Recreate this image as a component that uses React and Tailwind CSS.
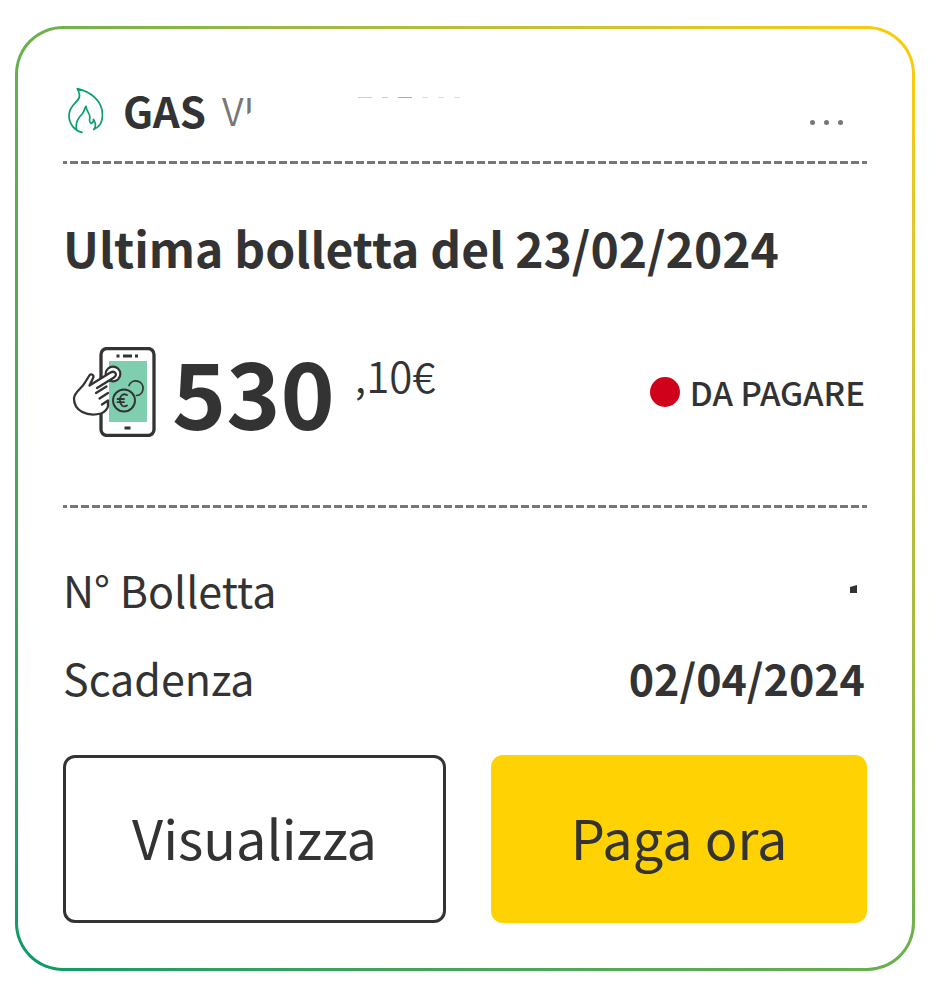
function FlameIcon() {
  return (
    <svg className="h-12 w-10 shrink-0" viewBox="0 0 40 48" fill="none" stroke="#0a9f6b" strokeWidth="1.7" strokeLinecap="round" strokeLinejoin="round" aria-hidden="true">
      <path d="M19 46.3C12 45 6 38 6 29.500C6 17 18.500 16 16.300 8C16 6 15.300 4.500 14.300 2.700C27 5.500 39.500 14.500 39.500 29C39.500 36 36.500 41 30.700 43.500C32.500 41.500 33 39.500 32 36.500L30.500 33.300C30.500 35.500 29.500 37.300 27.800 37.300C25 35 28 32 26.300 28.500C25.300 26 23.200 24 23 20.300C21.500 22 21.500 25 19.500 27.500C16.500 31 12 35 13.500 43.500" />
    </svg>
  );
}

function PhonePayIcon() {
  return (
    <svg className="h-[90px] w-[84px] shrink-0" viewBox="0 0 84 90" fill="none" stroke="#333" strokeLinecap="round" strokeLinejoin="round" aria-hidden="true">
      <rect x="29" y="1.500" width="53" height="87" rx="6" fill="#fff" strokeWidth="3.300" />
      <path d="M37 14H75V75H37Z" fill="#7fceb0" stroke="none" />
      <path d="M44.500 9H47.500M51 9H60M63 9H66M52.500 81H58.500" strokeWidth="3" strokeLinecap="butt" />
      <path d="M57 38.500A7.300 7.300 0 1 1 64.500 48.500" strokeWidth="1.700" />
      <circle cx="52" cy="53.500" r="11" strokeWidth="1.900" />
      <path d="M55 48C50 45.500 47.500 50 48 53.500C48.300 58 51 61 55 58.500M45.500 52H52M45.500 55.200H52" strokeWidth="1.800" />
      <circle cx="41" cy="27" r="7.300" fill="#fff" strokeWidth="2.200" />
      <path d="M29 66.500C15 70 2 64 2 51.500C2.500 44.500 9.500 42 13 35.500L17 29C18.500 26 22 27.500 21.300 30.500L17.500 38.500L38.500 25.500C43 23 46 28 42 30.500L36 34.500V59C36 61 33 65 29 66.500Z" fill="#fff" stroke="none" />
      <path d="M29 66.500C15 70 2 64 2 51.500C2.500 44.500 9.500 42 13 35.500L17 29C18.500 26 22 27.500 21.300 30.500L17.500 38.500L38.500 25.500C43 23 46 28 42 30.500L25 41M24 46L34.500 39.500M27.500 51.500L36 46M30 57.500L36 53.500V59C36 61 33 65 29 66.500" strokeWidth="2.300" />
    </svg>
  );
}

function DashedRule() {
  return <hr className="h-[3px] border-0 bg-[repeating-linear-gradient(90deg,#777_0,#777_4px,transparent_4px,transparent_7px,#777_7px,#777_11px)]" />;
}

function MaskedName() {
  return (
    <span className="flex h-12 flex-1 items-center text-[38px] font-[350] leading-[44px] text-[#777]">
      <span>V</span>
      <span className="[clip-path:polygon(0_0,100%_0,100%_50%,0_66%)]">I</span>
      <span className="ml-26 flex gap-[10px] self-start pt-[11px]" aria-hidden="true">
        <i className="h-px w-[14px] bg-[#ccc]" />
        <i className="h-px w-[6px] bg-[#ccc]" />
        <i className="h-px w-[14px] bg-[#aaa]" />
        <i className="h-px w-[6px] bg-[#ddd]" />
        <i className="h-px w-[6px] bg-[#ddd]" />
        <i className="h-px w-[6px] bg-[#ddd]" />
      </span>
    </span>
  );
}

export default function App() {
  return (
    <main className="bg-white pt-[26px] pr-[33px] pb-[19px] pl-[15px] font-['Noto_Sans_CJK_SC','Noto_Sans',sans-serif] text-[#333]">
      <article className="rounded-[48px] bg-linear-to-tr from-[#009b67] via-[#6ab04c] to-[#ffcc00] p-[3px]">
        <div className="rounded-[45px] bg-white px-[45px] pt-[57px] pb-[45px]">
          <header className="mb-[27px] flex h-12 items-center">
            <FlameIcon />
            <h1 className="mr-4 ml-5 text-[42px] leading-[48px] font-bold">GAS</h1>
            <MaskedName />
            <button type="button" aria-label="Altre opzioni" className="mt-6 mr-6 flex gap-[9px]">
              <span className="size-[5px] rounded-full bg-[#777]" />
              <span className="size-[5px] rounded-full bg-[#777]" />
              <span className="size-[5px] rounded-full bg-[#777]" />
            </button>
          </header>
          <DashedRule />

          <h2 className="mt-[53px] text-[48px] leading-[60px] font-bold whitespace-nowrap">Ultima bolletta del 23/02/2024</h2>

          <section className="mt-[70px] mb-[68px] flex h-[90px] items-center">
            <div className="ml-[9px]"><PhonePayIcon /></div>
            <p className="ml-4 flex items-start pb-1">
              <span className="text-[92px] leading-[88px] font-bold">530</span>
              <span className="ml-5 text-[42px] leading-[58px] font-[350]">,10€</span>
            </p>
            <p className="mr-[2px] ml-auto flex items-center gap-[10px] text-[33px] leading-10 font-medium">
              <span className="size-[30px] rounded-full bg-[#d0021b]" />
              DA PAGARE
            </p>
          </section>
          <DashedRule />

          <dl className="mt-[37px] text-[43px] leading-[88px]">
            <div className="flex justify-between">
              <dt>N° Bolletta</dt>
              <dd className="flex items-center pr-[10px]">
                <span className="h-2 w-[7px] bg-[#333] [clip-path:polygon(0_25%,100%_0,100%_100%,0_100%)]" />
              </dd>
            </div>
            <div className="flex justify-between">
              <dt>Scadenza</dt>
              <dd className="pr-[2px] font-bold">02/04/2024</dd>
            </div>
          </dl>

          <div className="mt-[34px] grid grid-cols-[383fr_376fr] gap-[45px] text-[54px] leading-[80px]">
            <button type="button" className="h-[168px] rounded-xl border-3 border-[#333] pb-1">Visualizza</button>
            <button type="button" className="h-[168px] rounded-xl bg-[#ffd204] pb-1">Paga ora</button>
          </div>
        </div>
      </article>
    </main>
  );
}
